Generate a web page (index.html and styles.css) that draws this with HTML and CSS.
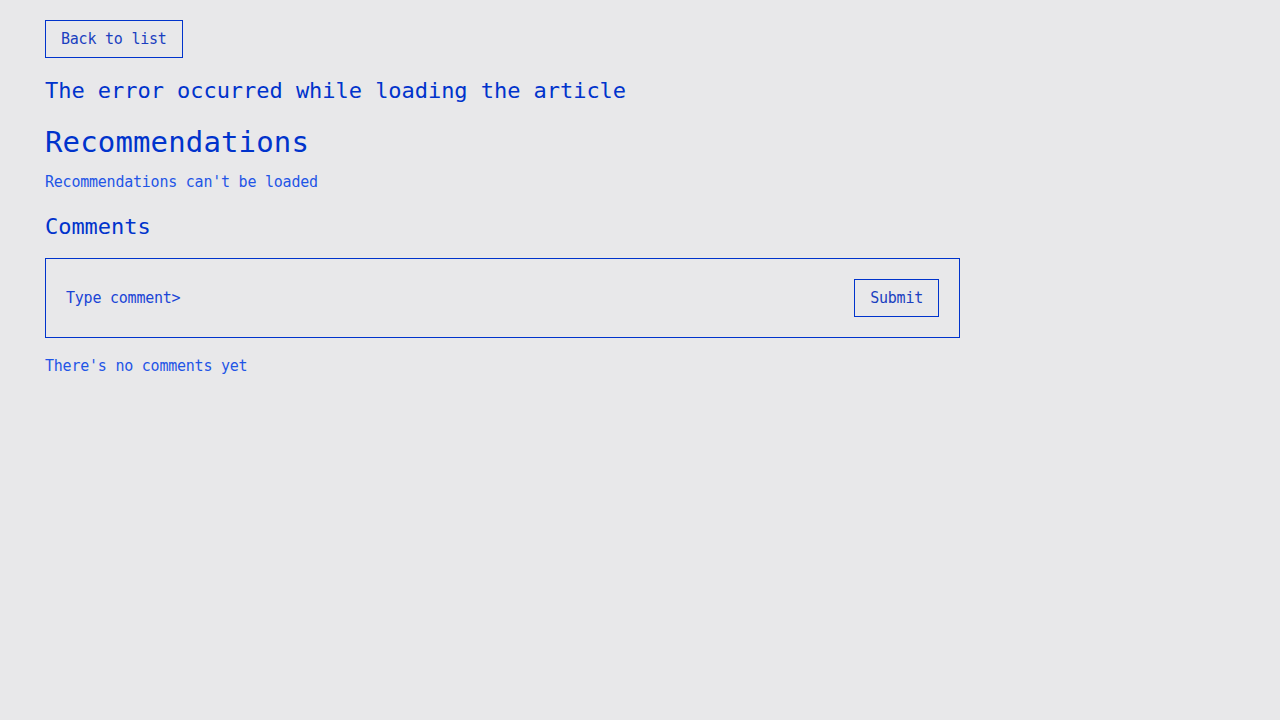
FILE: index.html
```html
<!DOCTYPE html>
<html lang="en">
<head>
<meta charset="utf-8">
<title>Article</title>
<link rel="stylesheet" href="styles.css">
</head>
<body>
<main class="page">
  <div class="top"><button class="btn">Back to list</button></div>
  <h2 class="error">The error occurred while loading the article</h2>
  <h1 class="rec-title">Recommendations</h1>
  <p class="note">Recommendations can't be loaded</p>
  <h2 class="comments-title">Comments</h2>
  <form class="comment-box">
    <span class="placeholder">Type comment&gt;</span>
    <button class="btn" type="button">Submit</button>
  </form>
  <p class="note no-comments">There's no comments yet</p>
</main>
</body>
</html>
```
FILE: styles.css
```css
html, body {
  margin: 0;
  padding: 0;
  background: #e8e8ea;
}
body {
  font-family: "DejaVu Sans Mono", "Liberation Mono", monospace;
  color: #0033cc;
}
.page {
  padding: 20px 45px;
}
.top {
  display: flex;
}
.btn {
  font-family: inherit;
  font-size: 15px;
  letter-spacing: -0.23px;
  color: #1a3fc0;
  background: transparent;
  border: 1px solid #0033cc;
  height: 38px;
  padding: 0 15px;
  margin: 0;
  cursor: pointer;
}
.error {
  margin: 19px 0 0;
  font-size: 22px;
  font-weight: normal;
  line-height: 28px;
  letter-spacing: -0.04px;
}
.rec-title {
  margin: 17px 0 0;
  font-size: 29px;
  font-weight: normal;
  line-height: 40px;
  letter-spacing: 0.14px;
}
.note {
  margin: 10px 0 0;
  font-size: 15px;
  line-height: 20px;
  letter-spacing: -0.23px;
  color: #1f55e6;
}
.comments-title {
  margin: 21px 0 0;
  font-size: 22px;
  font-weight: normal;
  line-height: 28px;
  letter-spacing: -0.04px;
}
.comment-box {
  margin: 17px 0 0;
  width: 915px;
  box-sizing: border-box;
  border: 1px solid #0033cc;
  padding: 20px;
  display: flex;
  align-items: center;
  justify-content: space-between;
}
.placeholder {
  font-size: 15px;
  letter-spacing: -0.23px;
  color: #1a45d6;
}
.no-comments {
  margin-top: 18px;
}
```
